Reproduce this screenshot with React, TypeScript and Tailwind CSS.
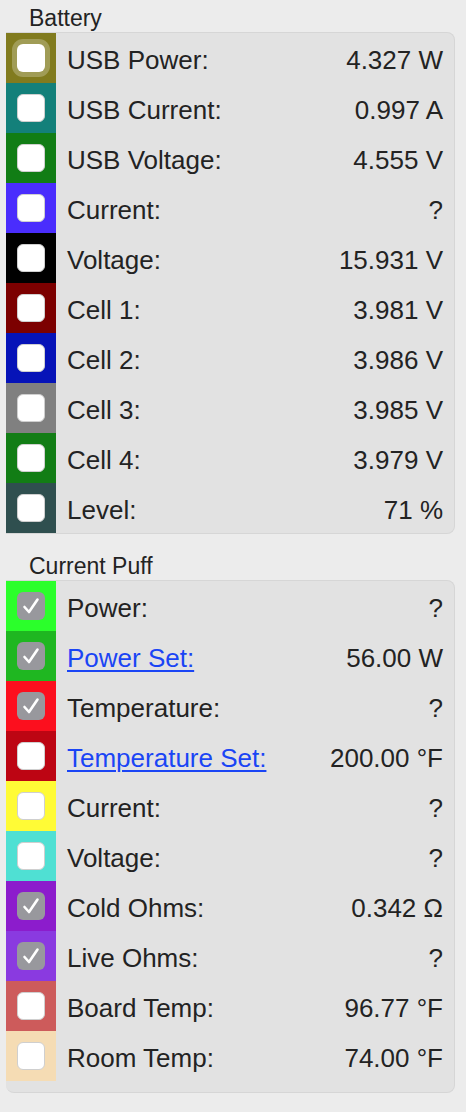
import type { ReactNode } from 'react';

interface Row {
  label: string;
  value: string;
  color: string;
  checked?: boolean;
  link?: boolean;
  focus?: boolean;
}

const battery: Row[] = [
  { label: 'USB Power:', value: '4.327 W', color: 'bg-[#817b1e]', focus: true },
  { label: 'USB Current:', value: '0.997 A', color: 'bg-[#13807a]' },
  { label: 'USB Voltage:', value: '4.555 V', color: 'bg-[#117d15]' },
  { label: 'Current:', value: '?', color: 'bg-[#4a2dfd]' },
  { label: 'Voltage:', value: '15.931 V', color: 'bg-black' },
  { label: 'Cell 1:', value: '3.981 V', color: 'bg-[#7c0000]' },
  { label: 'Cell 2:', value: '3.986 V', color: 'bg-[#0613b8]' },
  { label: 'Cell 3:', value: '3.985 V', color: 'bg-[#808080]' },
  { label: 'Cell 4:', value: '3.979 V', color: 'bg-[#127d15]' },
  { label: 'Level:', value: '71 %', color: 'bg-[#2f4f4f]' },
];

const puff: Row[] = [
  { label: 'Power:', value: '?', color: 'bg-[#2bff2b]', checked: true },
  { label: 'Power Set:', value: '56.00 W', color: 'bg-[#1fb721]', checked: true, link: true },
  { label: 'Temperature:', value: '?', color: 'bg-[#fc0f1e]', checked: true },
  { label: 'Temperature Set:', value: '200.00 °F', color: 'bg-[#bd0513]', link: true },
  { label: 'Current:', value: '?', color: 'bg-[#fffb36]' },
  { label: 'Voltage:', value: '?', color: 'bg-[#4fe0d3]' },
  { label: 'Cold Ohms:', value: '0.342 Ω', color: 'bg-[#8c1ccc]', checked: true },
  { label: 'Live Ohms:', value: '?', color: 'bg-[#8a3ae0]', checked: true },
  { label: 'Board Temp:', value: '96.77 °F', color: 'bg-[#cd5b5b]' },
  { label: 'Room Temp:', value: '74.00 °F', color: 'bg-[#f5dcb4]' },
];

function Checkbox({ checked, focus }: { checked?: boolean; focus?: boolean }) {
  if (checked) {
    return (
      <div className="w-[28px] h-[28px] rounded-[6px] bg-[#98989d] flex items-center justify-center">
        <svg width="22" height="22" viewBox="0 0 22 22" fill="none">
          <path d="M4.5 12 L9 17 L17.5 4.5" stroke="white" strokeWidth="2.6" strokeLinecap="round" strokeLinejoin="round" />
        </svg>
      </div>
    );
  }
  return (
    <div
      className={
        focus
          ? 'w-[28px] h-[28px] rounded-[6px] bg-white shadow-[0_0_0_5px_rgba(255,255,255,0.25)]'
          : 'w-[28px] h-[28px] rounded-[6px] bg-white border border-[#cfcfcf]'
      }
    />
  );
}

function Panel({ rows, last }: { rows: Row[]; last?: boolean }) {
  return (
    <div className={'ml-[6px] w-[449px] bg-[#e2e2e2] border border-l-0 border-[#d6d6d6] rounded-r-[8px] ' + (last ? 'pb-[11px] rounded-bl-[8px]' : '')}>
      {rows.map((r) => (
        <div key={r.label} className="flex items-center h-[50px]">
          <div className={'w-[50px] h-full flex items-center justify-center ' + r.color}>
            <Checkbox checked={r.checked} focus={r.focus} />
          </div>
          <span
            className={
              r.link
                ? 'ml-[11px] pt-[4px] text-[26px] text-[#1a45f5] underline underline-offset-[3px] decoration-[2px]'
                : 'ml-[11px] pt-[4px] text-[26px]'
            }
          >
            {r.label}
          </span>
          <span className="ml-auto pt-[4px] pr-[11px] text-[26px]">{r.value}</span>
        </div>
      ))}
    </div>
  );
}

function Header({ children }: { children: ReactNode }) {
  return <div className="h-[32px] pl-[29px] pt-[7px] text-[23px] leading-[23px]">{children}</div>;
}

export default function App() {
  return (
    <div className="min-h-screen bg-[#ececec] text-[#232323] font-['Liberation_Sans',sans-serif]">
      <Header>Battery</Header>
      <Panel rows={battery} />
      <div className="h-[14px]" />
      <Header>Current Puff</Header>
      <Panel rows={puff} last />
    </div>
  );
}
